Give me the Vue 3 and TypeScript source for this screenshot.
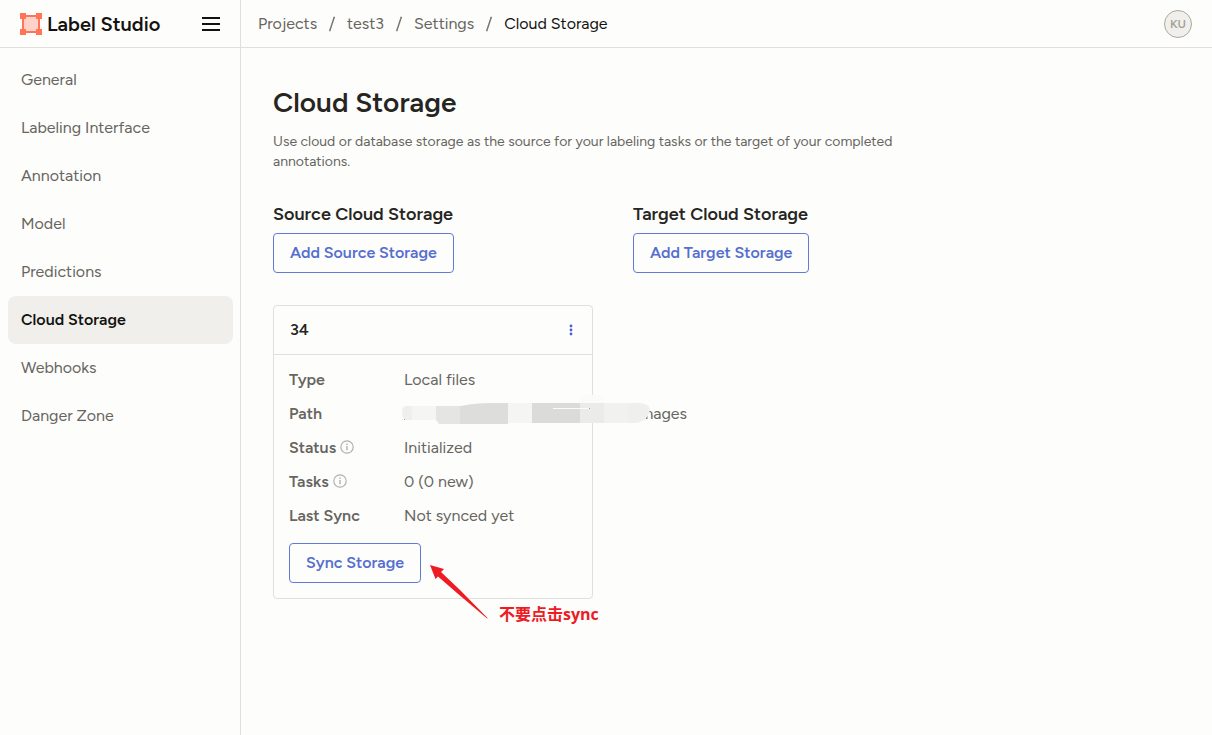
<script setup lang="ts">
import { ref } from 'vue'

interface StorageField {
  label: string
  value: string
  info?: boolean
  masked?: boolean
}

const menu: string[] = [
  'General',
  'Labeling Interface',
  'Annotation',
  'Model',
  'Predictions',
  'Cloud Storage',
  'Webhooks',
  'Danger Zone',
]
const active = ref('Cloud Storage')
const crumbs: string[] = ['Projects', 'test3', 'Settings']

const fields: StorageField[] = [
  { label: 'Type', value: 'Local files' },
  { label: 'Path', value: 'mages', masked: true },
  { label: 'Status', value: 'Initialized', info: true },
  { label: 'Tasks', value: '0 (0 new)', info: true },
  { label: 'Last Sync', value: 'Not synced yet' },
]
</script>

<template>
  <div class="app">
    <header class="topbar">
      <div class="brand">
        <a class="logo" href="#">
          <svg width="22" height="22" viewBox="0 0 22 22" aria-hidden="true">
            <rect x="3" y="3" width="16" height="16" fill="#fdfdfc" stroke="#ff7557" stroke-width="2" />
            <path d="M6 4h10l2 2v10l-2 2H6l-2-2V6z" fill="#ffd1c7" />
            <path d="M0 0h6v6H0zM16 0h6v6h-6zM0 16h6v6H0zM16 16h6v6h-6z" fill="#ff7557" />
          </svg>
          <span>Label Studio</span>
        </a>
        <button class="burger" type="button" aria-label="Toggle menu">
          <svg width="18" height="14" viewBox="0 0 18 14" aria-hidden="true">
            <path d="M0 0h18v2H0zM0 6h18v2H0zM0 12h18v2H0z" fill="#13120f" />
          </svg>
        </button>
      </div>
      <nav class="crumbs" aria-label="Breadcrumb">
        <template v-for="c in crumbs" :key="c">
          <a href="#">{{ c }}</a>
          <svg class="slash" width="6" height="16" viewBox="0 0 6 16" aria-hidden="true">
            <path d="M5.4 .8 .6 15.2" stroke="#77756e" stroke-width="1.5" />
          </svg>
        </template>
        <span class="current">Cloud Storage</span>
      </nav>
      <button class="avatar" type="button">KU</button>
    </header>

    <div class="body">
      <aside class="sidebar">
        <a
          v-for="m in menu"
          :key="m"
          href="#"
          class="item"
          :class="{ active: m === active }"
          @click.prevent="active = m"
        >{{ m }}</a>
      </aside>

      <main class="content">
        <h1>Cloud Storage</h1>
        <p class="desc">
          Use cloud or database storage as the source for your labeling tasks or the target of your completed
          annotations.
        </p>
        <div class="columns">
          <section>
            <h2>Source Cloud Storage</h2>
            <button class="btn" type="button">Add Source Storage</button>
            <article class="card">
              <div class="card-head">
                <h3>34</h3>
                <button class="more" type="button" aria-label="Storage actions">
                  <svg width="4" height="12" viewBox="0 0 4 12" aria-hidden="true">
                    <g fill="#4c5fce">
                      <circle cx="2" cy="2" r="1.4" />
                      <circle cx="2" cy="6" r="1.4" />
                      <circle cx="2" cy="10" r="1.4" />
                    </g>
                  </svg>
                </button>
              </div>
              <div class="card-body">
                <dl>
                  <div v-for="f in fields" :key="f.label" class="row">
                    <dt>
                      {{ f.label }}
                      <svg v-if="f.info" class="info" width="14" height="14" viewBox="0 0 14 14" aria-hidden="true">
                        <circle cx="7" cy="7" r="6.2" fill="none" stroke="#b3b1ab" stroke-width="1.2" />
                        <path d="M6.3 3.6h1.4v1.4H6.3zM6.3 6h1.4v4.2H6.3z" fill="#b3b1ab" />
                      </svg>
                    </dt>
                    <dd :class="{ path: f.masked }">
                      {{ f.value }}
                      <svg v-if="f.masked" class="mask" width="250" height="32" viewBox="0 0 250 32" aria-hidden="true">
                        <defs>
                          <clipPath id="smudge">
                            <path d="M5 11H60Q72 8 92 8H238Q249 9 249 15Q246 28 232 28H107V29H38L35 25H6Q1 25 1 18Q1 11 5 11Z" />
                          </clipPath>
                        </defs>
                        <rect x="178" y="0" width="24" height="9" rx="2" fill="#fbfbfa" />
                        <g clip-path="url(#smudge)">
                          <rect width="11" height="32" fill="#efefed" />
                          <rect x="11" width="24" height="32" fill="#f5f5f3" />
                          <rect x="35" width="24" height="32" fill="#e5e5e2" />
                          <rect x="59" width="48" height="32" fill="#dddddb" />
                          <rect x="107" width="24" height="32" fill="#f5f5f3" />
                          <rect x="131" width="48" height="32" fill="#dbdbd9" />
                          <rect x="179" width="24" height="32" fill="#ebebe9" />
                          <rect x="203" width="24" height="32" fill="#f1f1ef" />
                          <rect x="227" width="23" height="32" fill="#efefed" />
                        </g>
                        <path d="M152 13.5h37" stroke="#fbfbfa" />
                        <path d="M188 13.5h1M3 24.5h1" stroke="#a5a39c" />
                      </svg>
                    </dd>
                  </div>
                </dl>
                <button class="btn" type="button">Sync Storage</button>
              </div>
              <div class="note">
                <svg width="60" height="56" viewBox="0 0 60 56" aria-hidden="true">
                  <path d="M0 0 14 4 11 7 30 25 58 53.500 56.500 53 27 28 8 11.500 5.500 14Z" fill="#ed1c24" />
                </svg>
                <span>不要点击sync</span>
              </div>
            </article>
          </section>
          <section>
            <h2>Target Cloud Storage</h2>
            <button class="btn" type="button">Add Target Storage</button>
          </section>
        </div>
      </main>
    </div>
  </div>
</template>

<style>
body {
  margin: 0;
  background: #fdfdfc;
}
</style>

<style scoped>
.app {
  display: flex;
  flex-direction: column;
  min-height: 100vh;
  font-family: Figtree, Inter, "Noto Sans CJK SC", sans-serif;
  font-size: 16px;
  line-height: 24px;
  color: #67655e;
}
a {
  color: inherit;
  text-decoration: none;
}
button {
  font: inherit;
  cursor: pointer;
}
h1,
h2,
h3,
p,
dl,
dd {
  margin: 0;
}
.topbar {
  display: flex;
  align-items: center;
  height: 47px;
  border-bottom: 1px solid #e1dfda;
}
.brand {
  box-sizing: border-box;
  display: flex;
  align-items: center;
  justify-content: space-between;
  width: 241px;
  height: 47px;
  padding: 0 20px;
  border-right: 1px solid #e1dfda;
}
.logo {
  display: flex;
  align-items: center;
  gap: 5px;
  font-size: 20px;
  font-weight: 600;
  color: #13120f;
}
.burger {
  display: flex;
  padding: 0;
  border: 0;
  background: none;
}
.crumbs {
  display: flex;
  flex: 1;
  align-items: center;
  gap: 12px;
  padding-left: 17px;
}
.current {
  color: #13120f;
}
.avatar {
  box-sizing: border-box;
  width: 28px;
  height: 28px;
  margin-right: 20px;
  padding: 0;
  border: 1px solid #aaa79d;
  border-radius: 50%;
  background: #f0efec;
  font-size: 12px;
  font-weight: 600;
  line-height: 24px;
  color: #a3a19a;
}
.body {
  display: flex;
  flex: 1;
}
.sidebar {
  box-sizing: border-box;
  flex: none;
  width: 241px;
  padding: 8px 7px 8px 8px;
  border-right: 1px solid #e1dfda;
}
.item {
  display: block;
  padding: 12px 13px;
  border-radius: 8px;
}
.item.active {
  background: #f0efec;
  font-weight: 600;
  color: #13120f;
}
.content {
  flex: 1;
  padding: 36px 32px;
}
h1 {
  font-size: 28px;
  font-weight: 600;
  line-height: 36px;
  color: #262522;
}
.desc {
  max-width: 680px;
  margin: 12px 0 30px;
  font-size: 14px;
  line-height: 20px;
}
.columns {
  display: grid;
  grid-template-columns: 320px 320px;
  gap: 40px;
}
h2 {
  margin-bottom: 7px;
  font-size: 18px;
  font-weight: 600;
  line-height: 24px;
  color: #262522;
}
.btn {
  height: 40px;
  padding: 0 16px;
  border: 1px solid #617ada;
  border-radius: 4px;
  background: #fdfdfc;
  font-weight: 600;
  color: #566fcf;
}
.card {
  position: relative;
  margin-top: 32px;
  border: 1px solid #e1dfda;
  border-radius: 4px;
}
.card-head {
  display: flex;
  align-items: center;
  justify-content: space-between;
  padding: 12px 16px;
  border-bottom: 1px solid #e1dfda;
}
h3 {
  font-size: 16px;
  font-weight: 600;
  line-height: 24px;
  color: #262522;
}
.more {
  display: flex;
  padding: 4px 3px;
  border: 0;
  background: none;
}
.card-body {
  padding: 8px 15px 15px;
}
dl {
  margin-bottom: 10px;
}
.row {
  display: flex;
  align-items: center;
  height: 34px;
}
dt {
  display: flex;
  flex: none;
  align-items: center;
  gap: 4px;
  width: 115px;
  font-weight: 600;
}
.info {
  margin-bottom: 2px;
}
dd {
  white-space: nowrap;
}
.path {
  position: relative;
  flex: none;
  width: 283px;
  text-align: right;
}
.mask {
  position: absolute;
  top: -7px;
  left: -3px;
}
.note {
  position: absolute;
  top: 259px;
  left: 156px;
  display: flex;
  align-items: flex-end;
  gap: 9px;
  font-family: "Open Sans", "Noto Sans CJK SC", sans-serif;
  font-size: 16px;
  font-weight: 700;
  line-height: 14px;
  white-space: nowrap;
  color: #ed1c24;
}
</style>
